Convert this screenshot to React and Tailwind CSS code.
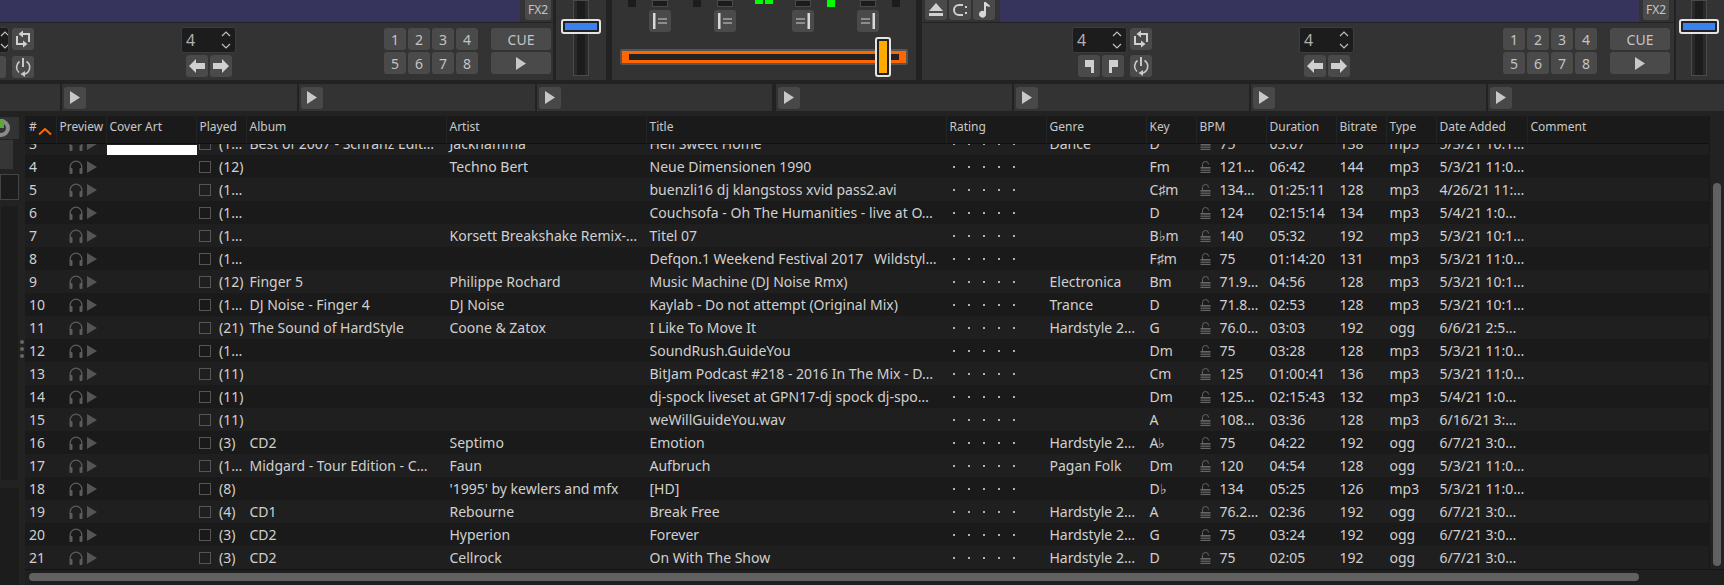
import React from "react";

const FONT = { fontFamily: '"Noto Sans", sans-serif' };

const Btn = ({ w = "w-[22px]", className = "", children }) => (
  <div className={`${w} h-[22px] shrink-0 rounded-[3px] bg-[#4a4a4a] flex items-center justify-center text-[#c4c4c4] ${className}`}>{children}</div>
);

const Play = ({ className = "" }) => (
  <svg width="10" height="13" viewBox="0 0 10 13" className={className}><path d="M0 0 L10 6.5 L0 13Z" fill="#c8c8c8" /></svg>
);
const LoopIcon = () => (
  <svg width="18" height="20" viewBox="0 0 18 20" fill="none" stroke="#d0d0d0" strokeWidth="2">
    <path d="M8 5h7v8" />
    <path d="M9 1.5v7L4.5 5Z" fill="#d0d0d0" stroke="none" />
    <path d="M10 15H3V7" />
    <path d="M9 11.5v7l4.5-3.5Z" fill="#d0d0d0" stroke="none" />
  </svg>
);
const ReloopIcon = () => (
  <svg width="18" height="20" viewBox="0 0 18 20" fill="none" stroke="#c8c8c8" strokeWidth="1.6">
    <path d="M9 1v9" strokeWidth="2" />
    <path d="M5.5 4.5A7 7 0 0 0 5 15.5" /><path d="M12.5 4.5A7 7 0 0 1 11 17" />
    <path d="M11 14v6L6.5 17Z" fill="#c8c8c8" stroke="none" />
  </svg>
);
const ArrowL = () => (
  <svg width="16" height="14" viewBox="0 0 16 14"><path d="M0 7L7 0v4h9v6H7v4Z" fill="#d0d0d0" /></svg>
);
const ArrowR = () => (
  <svg width="16" height="14" viewBox="0 0 16 14"><path d="M16 7L9 0v4H0v6h9v4Z" fill="#d0d0d0" /></svg>
);
const Chev = () => (
  <svg width="10" height="22" viewBox="0 0 10 22" fill="none" stroke="#c0c0c0" strokeWidth="1.2"><path d="M1 7l4-4 4 4" /><path d="M1 15l4 4 4-4" /></svg>
);
const Spin = ({ w = "w-[55px]" }) => (
  <div className={`${w} h-[26px] shrink-0 bg-[#1c1c1c] border border-[#3c3c3c] rounded-[3px] flex items-center justify-between pl-[4px] pr-[4px] text-[16px] text-[#b0b0b0]`}>
    <span>4</span>
    <Chev />
  </div>
);
const Hotcues = () => (
  <div className="grid grid-cols-4 gap-x-[2px] gap-y-[2px] w-[94px] text-[14px]">
    {[1, 2, 3, 4, 5, 6, 7, 8].map((n) => <Btn key={n}>{n}</Btn>)}
  </div>
);
const CuePlay = ({ ml }) => (
  <div className={`flex flex-col gap-[2px] ${ml}`}>
    <Btn w="w-[60px]" className="text-[14px]">CUE</Btn>
    <Btn w="w-[60px]"><Play /></Btn>
  </div>
);
const ArrowsSpin = ({ ml }) => (
  <div className={`flex flex-col items-center gap-[2px] -mt-[1px] ${ml}`}>
    <Spin />
    <div className="flex gap-[2px]"><Btn><ArrowL /></Btn><Btn><ArrowR /></Btn></div>
  </div>
);
const Fx2 = ({ ml }) => (
  <div className={`w-[26px] h-[20px] shrink-0 rounded-b-[3px] bg-[#4a4a4a] flex items-center justify-center text-[12px] text-[#c4c4c4] ${ml}`}>FX2</div>
);

const GainSlider = ({ trackMl, thumbMl }) => (
  <div className="relative h-[80px] bg-[#333333] w-full">
    <div className={`w-[16px] h-[76px] border border-[#4a4a4a] bg-[#2a2a2a] flex justify-center ${trackMl}`}>
      <div className="w-[8px] h-full bg-[#1c1c1c]" />
    </div>
    <div className={`absolute top-[19px] left-0 w-[40px] h-[15px] rounded-[3px] border-2 border-[#e4e4e4] bg-[#222] flex items-center justify-center ${thumbMl}`}>
      <div className="w-[32px] h-[7px] bg-[#3b82f0]" />
    </div>
  </div>
);

const Bal = ({ ml, flip }) => (
  <div className={`w-[22px] h-[22px] rounded-[3px] bg-[#4a4a4a] flex items-center justify-center shrink-0 ${ml}`}>
    <svg width="14" height="16" viewBox="0 0 14 16" className={flip ? "-scale-x-100" : ""}>
      <rect x="0" y="0" width="2.5" height="16" fill="#d8d8d8" />
      <rect x="5" y="5.5" width="9" height="1" fill="#cfcfcf" />
      <rect x="5" y="9.5" width="9" height="1" fill="#cfcfcf" />
    </svg>
  </div>
);

const Mixer = () => {
  const tops = [
    ["w-[8px] bg-[#1c1c1c]", "ml-[16px]"],
    ["w-[16px] border border-[#4a4a4a] bg-[#1c1c1c]", "ml-[16px]"],
    ["w-[8px] bg-[#1c1c1c]", "ml-[25px]"],
    ["w-[16px] border border-[#4a4a4a] bg-[#1c1c1c]", "ml-[16px]"],
  ];
  return (
    <div className="relative w-[304px] h-[80px] bg-[#333333] shrink-0">
      <div className="flex h-[7px]">
        {tops.map(([c, m], i) => <div key={i} className={`h-[7px] ${c} ${m}`} />)}
        <div className="w-[8px] h-[4px] bg-[#00ff00] ml-[22px]" />
        <div className="w-[8px] h-[4px] bg-[#00ff00] ml-[2px]" />
        <div className="w-[16px] h-[7px] border border-[#4a4a4a] bg-[#1c1c1c] ml-[22px]" />
        <div className="w-[8px] h-[7px] bg-[#00ff00] ml-[16px]" />
        <div className="w-[16px] h-[7px] border border-[#4a4a4a] bg-[#1c1c1c] ml-[25px]" />
        <div className="w-[8px] h-[7px] bg-[#1c1c1c] ml-[16px]" />
      </div>
      <div className="flex mt-[3px]">
        <Bal ml="ml-[37px]" />
        <Bal ml="ml-[43px]" />
        <Bal ml="ml-[56px]" flip />
        <Bal ml="ml-[43px]" flip />
      </div>
      <div className="ml-[8px] mt-[17px] w-[288px] h-[16px] rounded-[2px] bg-[#555] p-[2px]">
        <div className="w-full h-full bg-[#ff6600] px-[7px] py-[3px]">
          <div className="w-full h-full bg-[#222]" />
        </div>
      </div>
      <div className="absolute left-[263px] top-[37px] w-[16px] h-[40px] rounded-[3px] border-2 border-[#e4e4e4] bg-[#222] flex items-center justify-center">
        <div className="w-[8px] h-[32px] bg-[#ffaa00]" />
      </div>
    </div>
  );
};

const Top = () => (
  <div className="flex h-[80px] bg-[#222222]">
    <div className="w-[553px] shrink-0 flex flex-col">
      <div className="flex h-[22px] bg-[#333333]">
        <div className="w-[520px] bg-[#36335c]" />
        <Fx2 ml="ml-[5px]" />
      </div>
      <div className="h-[1px] bg-[#222]" />
      <div className="flex-1 bg-[#333333] flex pt-[5px]">
        <div className="w-[34px] shrink-0 grid grid-cols-[12px_22px] gap-y-[5px] -mt-[1px]">
          <div className="w-[9px] h-[26px] bg-[#1c1c1c] border-r border-y border-[#3c3c3c] rounded-r-[3px] flex items-center justify-end overflow-hidden">
            <div className="shrink-0 pr-[1px] -mr-[3px]"><Chev /></div>
          </div>
          <Btn className="mt-[1px]"><LoopIcon /></Btn>
          <div className="w-[6px] h-[22px] bg-[#4a4a4a] rounded-r-[3px] -mt-[4px]" />
          <Btn className="-mt-[4px]"><ReloopIcon /></Btn>
        </div>
        <ArrowsSpin ml="ml-[147px]" />
        <div className="ml-[148px]"><Hotcues /></div>
        <CuePlay ml="ml-[13px]" />
      </div>
    </div>
    <div className="w-[50px] ml-[3px] shrink-0">
      <GainSlider trackMl="ml-[17px]" thumbMl="ml-[5px]" />
    </div>
    <div className="w-[6px] shrink-0" />
    <Mixer />
    <div className="w-[6px] shrink-0" />
    <div className="w-[752px] shrink-0 flex flex-col">
      <div className="flex h-[22px] bg-[#333333]">
        <div className="flex gap-[2px] ml-[3px]">
          <div className="w-[22px] h-[20px] rounded-b-[3px] bg-[#4a4a4a] flex items-center justify-center">
            <svg width="14" height="14" viewBox="0 0 14 14"><path d="M7 0L14 8H0Z M0 10h14v3H0Z" fill="#d0d0d0" /></svg>
          </div>
          <div className="w-[22px] h-[20px] rounded-b-[3px] bg-[#4a4a4a] flex items-center justify-center">
            <svg width="16" height="14" viewBox="0 0 16 14" fill="none" stroke="#d0d0d0" strokeWidth="2"><path d="M11 2H7a5 5 0 0 0 0 10h4" /><rect x="13" y="3" width="2" height="2" fill="#d0d0d0" stroke="none" /><rect x="13" y="9" width="2" height="2" fill="#d0d0d0" stroke="none" /></svg>
          </div>
          <div className="w-[22px] h-[20px] rounded-b-[3px] bg-[#4a4a4a] flex items-center justify-center">
            <svg width="14" height="16" viewBox="0 0 14 16"><path d="M7 0h2v12a3.5 3.5 0 1 1-2-3ZM9 0c1 2 4 2 4 5l-4-1Z" fill="#d8d8d8" /></svg>
          </div>
        </div>
        <div className="w-[639px] ml-[5px] bg-[#36335c]" />
        <Fx2 ml="ml-[4px]" />
      </div>
      <div className="h-[1px] bg-[#222]" />
      <div className="flex-1 bg-[#333333] flex pt-[5px]">
        <div className="flex flex-col items-end gap-[2px] -mt-[1px] ml-[150px] w-[55px]">
          <Spin />
          <div className="flex gap-[2px] mr-[3px]">
            <Btn><svg width="9" height="13" viewBox="0 0 9 13"><path d="M0 0h9v13H6V7H0Z" fill="#d0d0d0" /></svg></Btn>
            <Btn><svg width="9" height="13" viewBox="0 0 9 13"><path d="M0 0h9v7H3v6H0Z" fill="#d0d0d0" /></svg></Btn>
          </div>
        </div>
        <div className="flex flex-col gap-[5px] ml-[3px]">
          <Btn><LoopIcon /></Btn>
          <Btn><ReloopIcon /></Btn>
        </div>
        <ArrowsSpin ml="ml-[147px]" />
        <div className="ml-[149px]"><Hotcues /></div>
        <CuePlay ml="ml-[13px]" />
      </div>
    </div>
    <div className="w-[48px] ml-[2px] shrink-0">
      <GainSlider trackMl="ml-[15px]" thumbMl="ml-[3px]" />
    </div>
  </div>
);

const PreviewRow = () => {
  const segs = [
    "w-[60px]", "w-[235px]", "w-[236px]", "w-[235px]",
    "w-[236px] ml-[2px]", "w-[235px]", "w-[235px]", "flex-1",
  ];
  return (
    <div className="flex gap-[2px] h-[27px] mt-[4px]">
      {segs.map((w, i) => (
        <div key={i} className={`${w} bg-[#333333] flex items-center pl-[2px]`}>
          {i > 0 && <Btn className="bg-[#484848]"><Play /></Btn>}
        </div>
      ))}
    </div>
  );
};

const COLS = [
  ["#", "w-[31.5px]"], ["Preview", "w-[50px]"], ["Cover Art", "w-[90px]"], ["Played", "w-[50px]"],
  ["Album", "w-[200px]"], ["Artist", "w-[200px]"], ["Title", "w-[300px]"], ["Rating", "w-[100px]"],
  ["Genre", "w-[100px]"], ["Key", "w-[50px]"], ["BPM", "w-[70px]"], ["Duration", "w-[70px]"],
  ["Bitrate", "w-[50px]"], ["Type", "w-[50px]"], ["Date Added", "w-[91px]"], ["Comment", "flex-1"],
];

const ROWS = [
  [3, "(1…", "Best of 2007 - Schranz Edit…", "Jackhamma", "Hell Sweet Home", "Dance", "D", "75", "03:07", "138", "mp3", "5/3/21 10:1…"],
  [4, "(12)", "", "Techno Bert", "Neue Dimensionen 1990", "", "Fm", "121…", "06:42", "144", "mp3", "5/3/21 11:0…"],
  [5, "(1…", "", "", "buenzli16 dj klangstoss xvid pass2.avi", "", "C♯m", "134…", "01:25:11", "128", "mp3", "4/26/21 11:…"],
  [6, "(1…", "", "", "Couchsofa - Oh The Humanities - live at O…", "", "D", "124", "02:15:14", "134", "mp3", "5/4/21 1:0…"],
  [7, "(1…", "", "Korsett Breakshake Remix-…", "Titel 07", "", "B♭m", "140", "05:32", "192", "mp3", "5/3/21 10:1…"],
  [8, "(1…", "", "", "Defqon.1 Weekend Festival 2017   Wildstyl…", "", "F♯m", "75", "01:14:20", "131", "mp3", "5/3/21 11:0…"],
  [9, "(12)", "Finger 5", "Philippe Rochard", "Music Machine (DJ Noise Rmx)", "Electronica", "Bm", "71.9…", "04:56", "128", "mp3", "5/3/21 10:1…"],
  [10, "(1…", "DJ Noise - Finger 4", "DJ Noise", "Kaylab - Do not attempt (Original Mix)", "Trance", "D", "71.8…", "02:53", "128", "mp3", "5/3/21 10:1…"],
  [11, "(21)", "The Sound of HardStyle", "Coone & Zatox", "I Like To Move It", "Hardstyle 2…", "G", "76.0…", "03:03", "192", "ogg", "6/6/21 2:5…"],
  [12, "(1…", "", "", "SoundRush.GuideYou", "", "Dm", "75", "03:28", "128", "mp3", "5/3/21 11:0…"],
  [13, "(11)", "", "", "BitJam Podcast #218 - 2016 In The Mix - D…", "", "Cm", "125", "01:00:41", "136", "mp3", "5/3/21 11:0…"],
  [14, "(11)", "", "", "dj-spock liveset at GPN17-dj spock dj-spo…", "", "Dm", "125…", "02:15:43", "132", "mp3", "5/4/21 1:0…"],
  [15, "(11)", "", "", "weWillGuideYou.wav", "", "A", "108…", "03:36", "128", "mp3", "6/16/21 3:…"],
  [16, "(3)", "CD2", "Septimo", "Emotion", "Hardstyle 2…", "A♭", "75", "04:22", "192", "ogg", "6/7/21 3:0…"],
  [17, "(1…", "Midgard - Tour Edition - C…", "Faun", "Aufbruch", "Pagan Folk", "Dm", "120", "04:54", "128", "ogg", "5/3/21 11:0…"],
  [18, "(8)", "", "'1995' by kewlers and mfx", "[HD]", "", "D♭", "134", "05:25", "126", "mp3", "5/3/21 11:0…"],
  [19, "(4)", "CD1", "Rebourne", "Break Free", "Hardstyle 2…", "A", "76.2…", "02:36", "192", "ogg", "6/7/21 3:0…"],
  [20, "(3)", "CD2", "Hyperion", "Forever", "Hardstyle 2…", "G", "75", "03:24", "192", "ogg", "6/7/21 3:0…"],
  [21, "(3)", "CD2", "Cellrock", "On With The Show", "Hardstyle 2…", "D", "75", "02:05", "192", "ogg", "6/7/21 3:0…"],
];

const Cell = ({ w, className = "", children }) => (
  <div className={`${w} shrink-0 h-full flex items-center whitespace-pre overflow-hidden ${className}`}>{children}</div>
);

const Headphones = () => (
  <svg width="14" height="14" viewBox="0 0 14 14" fill="none"><path d="M1.2 9V7a5.8 5.8 0 0 1 11.6 0v2" stroke="#5c5c5c" strokeWidth="1.3" /><rect x="0.5" y="8" width="3" height="6" rx="1" fill="#5c5c5c" /><rect x="10.5" y="8" width="3" height="6" rx="1" fill="#5c5c5c" /></svg>
);
const Lock = () => (
  <svg width="11" height="12" viewBox="0 0 11 12" fill="none"><path d="M2.5 6V3.5a3 3 0 0 1 6 0" stroke="#666" strokeWidth="1" /><rect x="0.5" y="6" width="10" height="1.6" fill="#666" /><rect x="0.5" y="8.6" width="10" height="1.2" fill="#666" /><rect x="0.5" y="10.8" width="10" height="1.2" fill="#666" /></svg>
);

const Row = ({ r, first }) => {
  const [n, played, album, artist, title, genre, key, bpm, dur, bit, type, date] = r;
  return (
    <div className={`flex h-[23px] ${n % 2 ? "bg-[#1f1f1f]" : "bg-[#1a1a1a]"}`}>
      <Cell w="w-[31.5px]" className="pl-[4px]">{n}</Cell>
      <Cell w="w-[50px]" className="pl-[12.5px] gap-[4px]">
        <Headphones />
        <svg width="10" height="12" viewBox="0 0 10 12"><path d="M0 0L10 6L0 12Z" fill="#555" /></svg>
      </Cell>
      <Cell w="w-[90px]" className="items-start">{first && <div className="w-[90px] h-[10px] bg-white mt-[13px]" />}</Cell>
      <Cell w="w-[50px]" className="pl-[2.5px] gap-[8px]">
        <div className="w-[12px] h-[12px] shrink-0 border border-[#555]" />
        <span>{played}</span>
      </Cell>
      <Cell w="w-[200px]" className="pl-[3px]">{album}</Cell>
      <Cell w="w-[200px]" className="pl-[3px]">{artist}</Cell>
      <Cell w="w-[300px]" className="pl-[3px]">{title}</Cell>
      <Cell w="w-[100px]" className="pl-[6px] gap-[13px]">
        {[0, 1, 2, 3, 4].map((i) => <div key={i} className="w-[2px] h-[2px] bg-[#b0b0b0]" />)}
      </Cell>
      <Cell w="w-[100px]" className="pl-[3px]">{genre}</Cell>
      <Cell w="w-[50px]" className="pl-[3px]">{key}</Cell>
      <Cell w="w-[70px]" className="pl-[3px] gap-[9px]"><Lock /><span>{bpm}</span></Cell>
      <Cell w="w-[70px]" className="pl-[3px]">{dur}</Cell>
      <Cell w="w-[50px]" className="pl-[3px]">{bit}</Cell>
      <Cell w="w-[50px]" className="pl-[3px]">{type}</Cell>
      <Cell w="w-[91px]" className="pl-[3px]">{date}</Cell>
      <div className="flex-1" />
    </div>
  );
};

const Table = () => (
  <div className="w-[1699px] flex flex-col h-[469px]">
    <div className="flex flex-1 min-h-0">
      <div className="flex-1 min-w-0 flex flex-col">
        <div className="relative z-10 flex h-[28px] shrink-0 bg-[#1a1a1a] border-b border-[#111] text-[12px] text-[#c8c8c8]">
          {COLS.map(([t, w], i) => (
            <div key={t} className={`${w} shrink-0 h-[27px] pl-[3px] pt-[2px] flex items-start leading-[18px] ${i === COLS.length - 1 ? "" : "border-r border-[#242424]"} ${i === 0 ? "pl-[4px] relative" : ""}`}>
              {t}
              {i === 0 && (
                <svg width="14" height="7" viewBox="0 0 14 7" fill="none" className="absolute left-[13px] top-[12px]"><path d="M1 6.5L7 1l6 5.5" stroke="#ff6600" strokeWidth="2" /></svg>
              )}
            </div>
          ))}
        </div>
        <div className="flex-1 overflow-hidden text-[14px] text-[#d0d0d0]">
          <div className="-mt-[12px]">
            {ROWS.map((r, i) => <Row key={r[0]} r={r} first={i === 0} />)}
          </div>
        </div>
      </div>
      <div className="w-[15px] shrink-0 bg-[#222] border-l border-[#181818] pl-[3px] pt-[67px] pb-[3px]">
        <div className="w-[8px] h-full rounded-[4px] bg-[#616161]" />
      </div>
    </div>
    <div className="h-[16px] shrink-0 bg-[#1f1f1f] border-t border-[#141414] pl-[4px] pt-[3px] flex">
      <div className="w-[1610px] h-[8px] rounded-[4px] bg-[#616161]" />
    </div>
  </div>
);

const Sidebar = () => (
  <div className="w-[19px] shrink-0 h-[469px] flex flex-col">
    <div className="h-[22px] mt-[1px] bg-[#333] overflow-hidden flex">
      <div className="w-[18px] h-[18px] shrink-0 -ml-[8px] mt-[2px] rounded-full border-[4px] border-[#8a8a8a] bg-[#333] flex justify-center">
        <div className="w-[6px] h-[9px] -mt-[4px] bg-[#5aa83a]" />
      </div>
    </div>
    <div className="h-[29px] bg-[#363636] mt-[1px] flex justify-end"><div className="w-[6px] bg-[#222]" /></div>
    <div className="h-[26px] mt-[5px] bg-[#1c1c1c] border border-[#444]" />
    <div className="h-[276px] mt-[5px] bg-[#1c1c1c] border border-[#242424]" />
    <div className="flex-1 mt-[7px] bg-[#1c1c1c]" />
  </div>
);

export default function App() {
  return (
    <div className="w-[1724px] h-[585px] overflow-hidden bg-[#222222]" style={FONT}>
      <Top />
      <PreviewRow />
      <div className="flex mt-[5px]">
        <Sidebar />
        <div className="w-[6px] shrink-0 flex flex-col items-center gap-[3px] pt-[224px]">
          {[0, 1, 2].map((i) => <div key={i} className="w-[4px] h-[4px] rounded-full bg-[#666]" />)}
        </div>
        <Table />
      </div>
    </div>
  );
}
